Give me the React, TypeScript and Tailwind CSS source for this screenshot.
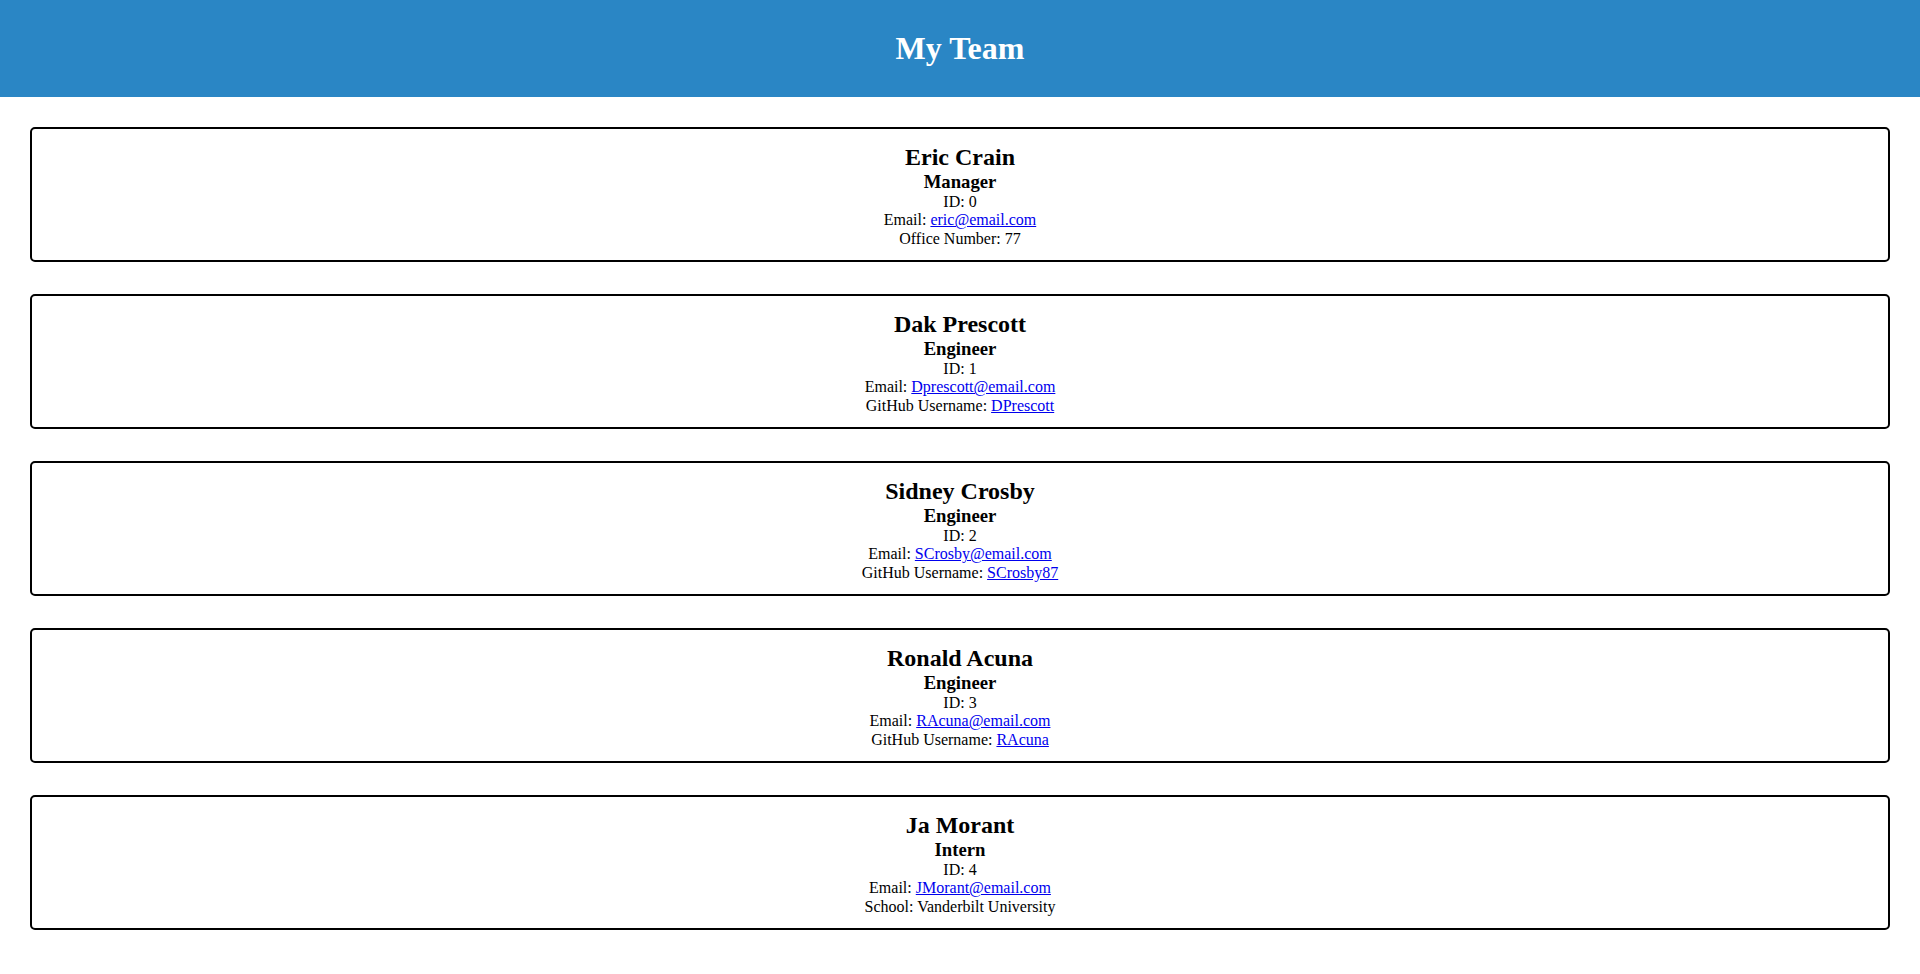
import React from "react";

type Member = {
  name: string;
  role: string;
  id: number;
  email: string;
  extra: { label: string; value: string; link?: string };
};

const team: Member[] = [
  { name: "Eric Crain", role: "Manager", id: 0, email: "eric@email.com", extra: { label: "Office Number", value: "77" } },
  { name: "Dak Prescott", role: "Engineer", id: 1, email: "Dprescott@email.com", extra: { label: "GitHub Username", value: "DPrescott", link: "https://github.com/DPrescott" } },
  { name: "Sidney Crosby", role: "Engineer", id: 2, email: "SCrosby@email.com", extra: { label: "GitHub Username", value: "SCrosby87", link: "https://github.com/SCrosby87" } },
  { name: "Ronald Acuna", role: "Engineer", id: 3, email: "RAcuna@email.com", extra: { label: "GitHub Username", value: "RAcuna", link: "https://github.com/RAcuna" } },
  { name: "Ja Morant", role: "Intern", id: 4, email: "JMorant@email.com", extra: { label: "School", value: "Vanderbilt University" } },
];

function Card({ m }: { m: Member }) {
  return (
    <div className="border-2 border-black rounded-[5px] h-[135px] pt-[3px] flex flex-col items-center justify-center text-center">
      <h2 className="text-[24px] font-bold leading-[1.15]">{m.name}</h2>
      <h3 className="text-[18.72px] font-bold leading-[1.15]">{m.role}</h3>
      <p className="text-[16px] leading-[1.15]">ID: {m.id}</p>
      <p className="text-[16px] leading-[1.15]">
        Email:{" "}
        <a href={`mailto:${m.email}`} className="text-[#0000ee] underline">
          {m.email}
        </a>
      </p>
      <p className="text-[16px] leading-[1.15]">
        {m.extra.label}:{" "}
        {m.extra.link ? (
          <a href={m.extra.link} className="text-[#0000ee] underline">
            {m.extra.value}
          </a>
        ) : (
          m.extra.value
        )}
      </p>
    </div>
  );
}

export default function App() {
  return (
    <div className="min-h-screen bg-white text-black font-['Liberation_Serif','Times_New_Roman',serif]">
      <header className="h-[97px] bg-[#2a86c5] flex items-center justify-center">
        <h1 className="text-[32px] font-bold text-white leading-[1.15]">My Team</h1>
      </header>
      <main className="px-[30px] pt-[30px] flex flex-col gap-[32px]">
        {team.map((m) => (
          <Card key={m.id} m={m} />
        ))}
      </main>
    </div>
  );
}
